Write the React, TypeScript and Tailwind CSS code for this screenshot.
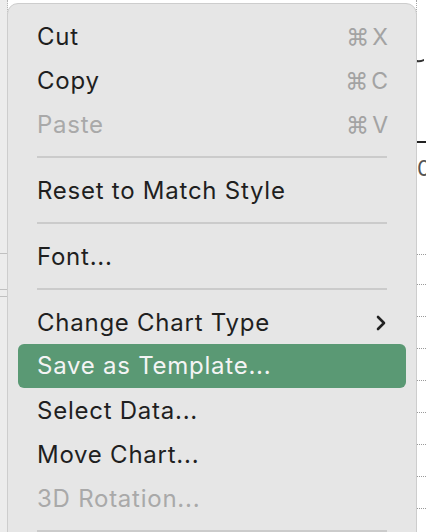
import React from "react";

type Item =
  | { kind: "item"; label: string; shortcut?: string; disabled?: boolean; submenu?: boolean; active?: boolean }
  | { kind: "sep" };

const items: Item[] = [
  { kind: "item", label: "Cut", shortcut: "X" },
  { kind: "item", label: "Copy", shortcut: "C" },
  { kind: "item", label: "Paste", shortcut: "V", disabled: true },
  { kind: "sep" },
  { kind: "item", label: "Reset to Match Style" },
  { kind: "sep" },
  { kind: "item", label: "Font..." },
  { kind: "sep" },
  { kind: "item", label: "Change Chart Type", submenu: true },
  { kind: "item", label: "Save as Template...", active: true },
  { kind: "item", label: "Select Data..." },
  { kind: "item", label: "Move Chart..." },
  { kind: "item", label: "3D Rotation...", disabled: true },
  { kind: "sep" },
];

function GridLine() {
  return <div className="h-[32px] border-b border-dotted border-[#9a9a9a] shrink-0" />;
}

export default function App() {
  return (
    <div
      className="relative w-[426px] h-[532px] overflow-hidden bg-white"
      style={{ fontFamily: "Inter, 'Noto Sans', sans-serif" }}
    >
      {/* spreadsheet background */}
      <div className="flex h-full">
        <div className="w-[8px] h-full bg-[#ececec] border-r border-dotted border-[#b5b5b5] flex flex-col pt-[253px]">
          <div className="h-[36px] border-t border-[#c0c0c0]" />
          <div className="h-[7px] border-t border-[#c0c0c0]" />
          <div className="border-t border-[#c0c0c0]" />
        </div>
        <div className="flex-1" />
        <div className="w-[10px] h-full border-l border-dotted border-[#a5a5a5] flex flex-col overflow-hidden">
          <div className="h-[52px] shrink-0" />
          <svg width="10" height="16" viewBox="0 0 10 16" className="shrink-0 -ml-[3px]">
            <path d="M0 8 Q5 11 12 7" stroke="#333" strokeWidth="2" fill="none" />
          </svg>
          <div className="h-[73px] shrink-0" />
          <div className="h-[2px] bg-[#222] shrink-0" />
          <div className="h-[14px] shrink-0" />
          <div className="text-[22px] leading-none text-[#555] shrink-0">0</div>
          <div className="h-[76px] shrink-0 border-b border-dotted border-[#9a9a9a]" />
          <div className="h-[30px] shrink-0 border-b border-dotted border-[#9a9a9a]" />
          <GridLine />
          <GridLine />
          <GridLine />
          <GridLine />
          <GridLine />
          <GridLine />
          <GridLine />
        </div>
      </div>

      {/* context menu */}
      <div className="absolute left-[7px] top-[3px] w-[410px] h-[560px] rounded-t-[11px] bg-[#e6e6e6] border border-[#cdcdcd] pt-[11px] px-[10px]">
        <div className="flex flex-col">
          {items.map((it, i) =>
            it.kind === "sep" ? (
              <div key={i} className="h-[22px] pt-[9px] px-[19px]">
                <div className="w-full h-[2px] bg-[#cbcbcb]" />
              </div>
            ) : (
              <div
                key={i}
                className={
                  "h-[44px] flex items-center justify-between pl-[19px] pr-[18px] rounded-[6px] text-[24px] tracking-[0.75px] " +
                  (it.active
                    ? "bg-[#5a9974] text-[#f4f4f4] -mt-px mb-px"
                    : it.disabled
                    ? "text-[#a9a9a9]"
                    : "text-[#1f1f1f]")
                }
              >
                <span>{it.label}</span>
                {it.shortcut && (
                  <span className="text-[#a3a3a3] flex items-center gap-[3px] text-[23px] tracking-normal">
                    <span>⌘</span>
                    <span>{it.shortcut}</span>
                  </span>
                )}
                {it.submenu && (
                  <svg width="12" height="16" viewBox="0 0 12 16" className="mr-[1px]">
                    <path d="M3 2 L9 8 L3 14" stroke="#222" strokeWidth="2.6" fill="none" strokeLinecap="round" strokeLinejoin="round" />
                  </svg>
                )}
              </div>
            )
          )}
        </div>
      </div>
    </div>
  );
}
